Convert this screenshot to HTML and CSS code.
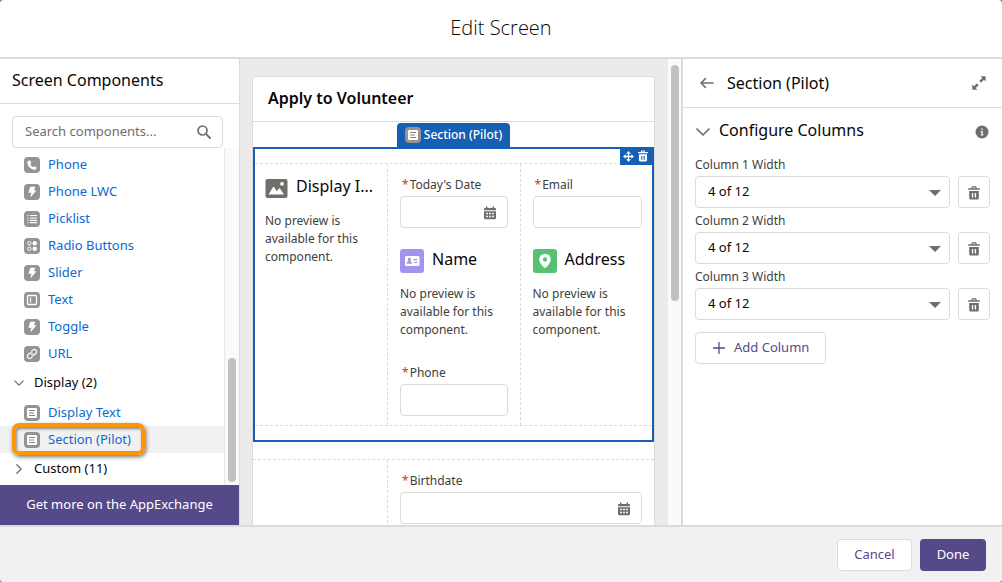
FILE: index.html
```html
<!DOCTYPE html>
<html lang="en">
<head>
<meta charset="utf-8">
<title>Edit Screen</title>
<meta name="viewport" content="width=device-width, initial-scale=1">
<link rel="stylesheet" href="styles.css">
</head>
<body>
<svg class="defs" aria-hidden="true">
  <symbol id="bolt" viewBox="0 0 16 16"><path fill="#fff" d="M6.700 2.800h4.300q.4 0 .2.400L9.900 6.300h2q.5 0 .2.500L6.800 13q-.5.300-.4-.3l1-3.900H4.900q-.5 0-.4-.5L6.200 3.200q.2-.4.500-.4z"/></symbol>
  <symbol id="lines" viewBox="0 0 16 16"><rect x="3" y="3" width="10" height="10" rx="1.200" fill="#fff"/><path d="M5 5.500h6M5 8h5M5 10.500h6" stroke="#868482" stroke-width="1.100"/></symbol>
  <symbol id="calendar" viewBox="0 0 12 14"><path fill="#706e6b" d="M1 2h1V.8q0-.6.7-.6t.7.6V2h5.200V.8q0-.6.7-.6t.7.6V2h1q1 0 1 1v1.200H0V3q0-1 1-1zM0 5.300h12V12q0 1.200-1.200 1.200H1.200Q0 13.200 0 12z"/><path fill="#fff" d="M2.200 6.700h1.800v1.600H2.200zM5.100 6.700h1.800v1.600H5.100zM8 6.700h1.800v1.600H8zM2.200 9.700h1.800v1.600H2.200zM5.100 9.700h1.800v1.600H5.100zM8 9.700h1.800v1.600H8z"/></symbol>
  <symbol id="trash" viewBox="0 0 12 14"><path fill="currentColor" fill-rule="evenodd" d="M.6 2.300h2.900V1.300Q3.500.3 4.500.3h3q1 0 1 1v1h2.900q.6 0 .6.600v.2q0 .6-.6.600H.6Q0 3.700 0 3.100v-.2q0-.6.6-.6zM4.700 1.500v.8h2.600v-.8zM1.200 5h9.600v7.200q0 1.300-1.300 1.300h-7q-1.300 0-1.300-1.300zM3.900 7v4.500h1.300V7zM6.800 7v4.500h1.300V7z"/></symbol>
  <symbol id="down" viewBox="0 0 14 14"><path d="M1 4l6 6 6-6" fill="none" stroke="#706e6b" stroke-width="1.700" stroke-linecap="round" stroke-linejoin="round"/></symbol>
</svg>

<header class="modal-header"><h1>Edit Screen</h1></header>

<main class="builder">
  <aside class="palette">
    <h2 class="palette-title">Screen Components</h2>
    <div class="search">
      <input type="text" aria-label="Search components" placeholder="Search components...">
      <svg class="search-icon" viewBox="0 0 14 14"><circle cx="5.500" cy="5.500" r="4.500" fill="none" stroke="#706e6b" stroke-width="1.700"/><path d="M8.800 8.800l4.200 4.200" stroke="#706e6b" stroke-width="1.900" stroke-linecap="round"/></svg>
    </div>
    <div class="palette-scroll">
      <div class="palette-list">
        <ul class="items first">
          <li><svg class="tile" viewBox="0 0 16 16"><path fill="#fff" d="M5.200 3.200q-2 .8-1.900 2.500.6 5 6.200 7.100 1.900.5 3-1.200.5-.7-.1-1.200l-1.500-1q-.5-.3-1 .2l-.7.700q-1.900-.8-2.900-2.800l.7-.8q.4-.4.100-1L6.200 3.500q-.4-.5-1-.3z"/></svg><a href="#">Phone</a></li>
          <li><svg class="tile"><use href="#bolt"/></svg><a href="#">Phone LWC</a></li>
          <li><svg class="tile" viewBox="0 0 16 16"><path d="M6 4.500h7M6 7h7M6 9.300h7M6 11.700h7" stroke="#fff" stroke-width="1.200"/><path d="M3 4.500h2M3 7h2M3 9.300h2M3 11.700h2" stroke="#d8d7d6"/></svg><a href="#">Picklist</a></li>
          <li><svg class="tile" viewBox="0 0 16 16"><g fill="none" stroke="#fff"><circle cx="5.300" cy="5.300" r="1.700"/><circle cx="5.300" cy="10.700" r="1.700"/></g><circle cx="10.700" cy="5.300" r="2.200" fill="#fff"/><circle cx="10.700" cy="10.700" r="2.200" fill="#fff"/></svg><a href="#">Radio Buttons</a></li>
          <li><svg class="tile"><use href="#bolt"/></svg><a href="#">Slider</a></li>
          <li><svg class="tile" viewBox="0 0 16 16"><rect x="3.500" y="3.500" width="9" height="9" rx="1" fill="none" stroke="#fff" stroke-width="1.300"/><path d="M6.500 5.500v5" stroke="#fff" stroke-width="1.200"/></svg><a href="#">Text</a></li>
          <li><svg class="tile"><use href="#bolt"/></svg><a href="#">Toggle</a></li>
          <li><svg class="tile" viewBox="0 0 16 16"><g fill="none" stroke="#fff" stroke-width="1.200" stroke-linecap="round"><path d="M7.600 5.200l1.500-1.300q1.600-1.100 2.900.2t.2 2.900L10.500 8.700q-1.300 1-2.600 0"/><path d="M8.400 10.800l-1.500 1.300q-1.600 1.100-2.900-.2t-.2-2.900l1.700-1.700q1.300-1 2.600 0"/></g></svg><a href="#">URL</a></li>
        </ul>
        <button class="group" type="button"><svg class="chev"><use href="#down"/></svg><span>Display (2)</span></button>
        <ul class="items">
          <li><svg class="tile"><use href="#lines"/></svg><a href="#">Display Text</a></li>
          <li class="hovered"><svg class="tile"><use href="#lines"/></svg><a href="#">Section (Pilot)</a><span class="callout"></span></li>
        </ul>
        <button class="group" type="button"><svg class="chev closed"><use href="#down"/></svg><span>Custom (11)</span></button>
      </div>
      <div class="track palette-track"><div class="thumb"></div></div>
    </div>
    <button class="exchange" type="button">Get more on the AppExchange</button>
  </aside>

  <section class="canvas">
    <div class="canvas-area">
      <div class="card">
        <h2 class="card-title">Apply to Volunteer</h2>
        <div class="tab-row"><span class="tab"><svg class="tile"><use href="#lines"/></svg>Section (Pilot)</span></div>
        <div class="selected">
          <div class="tools">
            <button type="button" aria-label="Move"><svg class="move" viewBox="0 0 12 12"><path d="M6 1.500v9M1.500 6h9" stroke="#fff" stroke-width="1.400"/><path fill="#fff" d="M6 0l2.500 2.900h-5zM6 12l2.500-2.900h-5zM0 6l2.900-2.500v5zM12 6L9.100 3.500v5z"/></svg></button>
            <button type="button" aria-label="Delete"><svg class="bin-small"><use href="#trash"/></svg></button>
          </div>
          <div class="columns">
            <div class="col">
              <div class="block-head"><svg class="image-icon" viewBox="0 0 22 19"><rect width="22" height="19" rx="2" fill="#706e6b"/><path fill="#fff" d="M3 15.500L7.600 8q.5-.7 1 0l2.600 4.200 2.200-2.600q.6-.6 1.100 0l4 5.900z"/><circle cx="16.500" cy="4.800" r="1.900" fill="#fff"/></svg><h3>Display I...</h3></div>
              <p>No preview is available for this component.</p>
            </div>
            <div class="col">
              <label for="today"><b>*</b>Today's Date</label>
              <div class="date"><input id="today" type="text"><svg><use href="#calendar"/></svg></div>
              <div class="block-head spaced"><svg class="type-icon name" viewBox="0 0 24 24"><rect x="5" y="7" width="14.500" height="10" rx="1.500" fill="#fff"/><path fill="#a094ed" d="M9.300 8.600q1.600 0 1.600 1.700 0 1.100-.7 1.800 1.900.5 1.900 2.600H6.600q0-2.100 1.900-2.600-.7-.7-.7-1.800 0-1.700 1.500-1.700zM13.300 10h4v1.200h-4zM14.300 12.700h3v1.200h-3z"/></svg><h3>Name</h3></div>
              <p>No preview is available for this component.</p>
              <label class="after" for="phone"><b>*</b>Phone</label>
              <input id="phone" type="text">
            </div>
            <div class="col">
              <label for="email"><b>*</b>Email</label>
              <input id="email" type="text">
              <div class="block-head spaced"><svg class="type-icon address" viewBox="0 0 24 24"><path fill="#fff" fill-rule="evenodd" d="M12 4.800q5.700.3 5.700 5.800 0 3.800-5 8.200-.7.500-1.400 0-5-4.400-5-8.200 0-5.500 5.700-5.800zM12 8.300a2.200 2.200 0 1 0 .01 0z"/></svg><h3>Address</h3></div>
              <p>No preview is available for this component.</p>
            </div>
          </div>
        </div>
        <div class="second">
          <div class="col"></div>
          <div class="col">
            <label for="birth"><b>*</b>Birthdate</label>
            <div class="date"><input id="birth" type="text"><svg><use href="#calendar"/></svg></div>
          </div>
        </div>
      </div>
    </div>
    <div class="track canvas-track"><div class="thumb"></div></div>
  </section>

  <aside class="props">
    <div class="props-head">
      <button type="button" aria-label="Back"><svg class="back" viewBox="0 0 16 12"><path d="M14 6H2M6.500 1.500L2 6l4.500 4.500" fill="none" stroke="#706e6b" stroke-width="1.600" stroke-linecap="round" stroke-linejoin="round"/></svg></button>
      <h2>Section (Pilot)</h2>
      <button type="button" aria-label="Expand"><svg class="expand" viewBox="0 0 14 14"><path fill="#706e6b" d="M8.600.3h4.500q.6 0 .6.600v4.500L12 3.700 9.400 6.300q-.4.300-.8 0l-.9-.9q-.3-.4 0-.8L10.300 2zM5.400 13.700H.9q-.6 0-.6-.6V8.600L2 10.300l2.600-2.600q.4-.3.800 0l.9.900q.3.400 0 .8L3.700 12z"/></svg></button>
    </div>
    <div class="props-body">
      <div class="config">
        <button class="config-title" type="button"><svg><use href="#down"/></svg><span>Configure Columns</span></button>
        <svg class="info" viewBox="0 0 14 14"><circle cx="7" cy="7" r="6.500" fill="#706e6b"/><path fill="#fff" d="M6.300 3.400h1.500v1.400H6.300zM5.700 5.900h2.100v3.500h.6v1H5.700v-1h.7V6.900h-.7z"/></svg>
      </div>
      <label for="w1">Column 1 Width</label>
      <div class="width-row"><div class="select"><select id="w1"><option>4 of 12</option></select></div><button class="bin" type="button" aria-label="Delete column 1"><svg><use href="#trash"/></svg></button></div>
      <label for="w2">Column 2 Width</label>
      <div class="width-row"><div class="select"><select id="w2"><option>4 of 12</option></select></div><button class="bin" type="button" aria-label="Delete column 2"><svg><use href="#trash"/></svg></button></div>
      <label for="w3">Column 3 Width</label>
      <div class="width-row"><div class="select"><select id="w3"><option>4 of 12</option></select></div><button class="bin" type="button" aria-label="Delete column 3"><svg><use href="#trash"/></svg></button></div>
      <button class="add" type="button"><svg viewBox="0 0 12 12"><path d="M6 .5v11M.5 6h11" stroke="#56498a" stroke-width="1.300" stroke-linecap="round"/></svg><span>Add Column</span></button>
    </div>
  </aside>
</main>

<footer class="modal-footer">
  <button class="cancel" type="button">Cancel</button>
  <button class="done" type="button">Done</button>
</footer>
</body>
</html>
```
FILE: styles.css
```css
* { box-sizing: border-box; }
html { background: #8c8b8a; }
body {
  margin: 0;
  height: 100vh;
  display: flex;
  flex-direction: column;
  overflow: hidden;
  border-radius: 4px;
  background: #fff;
  color: #080707;
  font: 13px/18px "Noto Sans", "Open Sans", sans-serif;
}
h1, h2, h3, p, ul { margin: 0; padding: 0; font-weight: 400; }
button, input, select { font: inherit; color: inherit; }
button { border: 0; padding: 0; background: none; cursor: pointer; }
svg { display: block; flex: none; }
.defs { position: absolute; width: 0; height: 0; }

.modal-header {
  flex: none;
  height: 59px;
  padding-bottom: 2px;
  border-bottom: 2px solid #dddbda;
  display: flex;
  align-items: center;
  justify-content: center;
}
.modal-header h1 {
  font-family: "Open Sans", "Noto Sans", sans-serif;
  font-size: 20px;
  font-weight: 300;
  line-height: 28px;
}

.builder {
  flex: 1;
  min-height: 0;
  display: grid;
  grid-template-columns: 240px minmax(0, 441fr) minmax(0, 321fr);
}

.palette {
  display: flex;
  flex-direction: column;
  min-height: 0;
  border-right: 1px solid #dddbda;
}
.palette-title {
  flex: none;
  height: 45px;
  padding: 0 12px;
  border-bottom: 1px solid #dddbda;
  font-size: 16px;
  line-height: 43px;
}
.search { flex: none; position: relative; padding: 12px 16px 0 12px; }
input {
  display: block;
  width: 100%;
  height: 32px;
  padding: 0 12px 2px;
  border: 1px solid #dddbda;
  border-radius: 4px;
  background: #fff;
}
input::placeholder { color: #706e6b; opacity: 1; }
.search-icon { position: absolute; right: 28px; top: 21px; width: 14px; height: 14px; }
.palette-scroll { flex: 1; min-height: 0; display: flex; }
.palette-list { flex: 1; min-width: 0; overflow: hidden; }
.items { list-style: none; }
.items.first { padding-top: 3px; }
.items li {
  position: relative;
  display: flex;
  align-items: center;
  gap: 8px;
  height: 27px;
  padding-left: 24px;
}
.items a { padding-bottom: 2px; color: #0b69d3; text-decoration: none; }
.tile { width: 16px; height: 16px; border-radius: 4px; background: #969492; }
.items .hovered { background: #f1f1f1; }
.callout {
  position: absolute;
  left: 12px;
  top: -3px;
  width: 133px;
  height: 32px;
  border: 4px solid #fe9602;
  border-radius: 7px;
  box-shadow: 1px 2px 4px rgba(0, 0, 0, .55), inset 1px 2px 3px rgba(0, 0, 0, .45);
}
.group {
  width: 100%;
  height: 32px;
  padding-left: 12px;
  display: flex;
  align-items: center;
  gap: 8px;
}
.group span, .add span { padding-bottom: 2px; }
.chev { width: 14px; height: 14px; padding: 2px; }
.closed { transform: rotate(-90deg); }

.track { flex: none; background: #fafafa; }
.thumb { border-radius: 4px; background: #c1c1c1; }
.palette-track {
  width: 15px;
  padding: 0 3px 3px;
  border-left: 1px solid #e8e8e8;
  display: flex;
  flex-direction: column;
  justify-content: flex-end;
}
.palette-track .thumb { width: 8px; height: 37%; }
.exchange { flex: none; height: 40px; padding-bottom: 2px; background: #56498a; color: #fff; }

.canvas { min-height: 0; display: flex; overflow: hidden; background: #ecebea; }
.canvas-area { flex: 1; min-width: 0; padding: 17px 13px 0 12px; }
.canvas-track { width: 13px; padding: 6px 3px; }
.canvas-track .thumb { width: 8px; height: 52%; }

.card {
  min-height: 100%;
  border: 1px solid #dddbda;
  border-radius: 4px 4px 0 0;
  background: #fff;
}
.card-title {
  height: 45px;
  padding: 0 15px;
  border-bottom: 1px solid #dddbda;
  font-size: 16px;
  font-weight: 600;
  line-height: 43px;
}
.tab-row { height: 25px; display: flex; justify-content: center; align-items: flex-end; }
.tab {
  height: 24px;
  padding: 0 8px;
  display: flex;
  align-items: center;
  gap: 3px;
  border-radius: 4px 4px 0 0;
  background: #155fb4;
  color: #fff;
  font-size: 12px;
  font-weight: 500;
}
.selected { position: relative; padding: 14px 0; border: 2px solid #155fb4; }
.tools {
  position: absolute;
  top: -2px;
  right: -2px;
  height: 18px;
  padding: 0 6px 0 3px;
  display: flex;
  align-items: center;
  gap: 4px;
  background: #155fb4;
  color: #fff;
}
.move { width: 11px; height: 11px; }
.bin-small { width: 10px; height: 12px; }
.columns {
  display: grid;
  grid-template-columns: 132px 1fr 1fr;
  border-top: 1px dashed #dddbda;
  border-bottom: 1px dashed #dddbda;
}
.col { min-width: 0; padding: 12px 12px 9px; }
.columns .col:first-child { padding-left: 10px; }
.columns .col:last-child { padding-right: 10px; }
.col + .col { border-left: 1px dashed #dddbda; }
label { display: block; font-size: 12px; line-height: 18px; color: #3e3e3c; }
.col label { padding: 0 0 0 2px; margin-bottom: 2px; }
.col label b { margin-right: 1px; color: #d8322c; font-weight: 400; }
.col .after { margin-top: 25px; }
.date { position: relative; }
.date svg { position: absolute; right: 12px; top: 10px; width: 12px; height: 14px; }
.block-head { display: flex; align-items: center; gap: 8px; height: 24px; }
.spaced { margin-top: 21px; }
.block-head h3 {
  min-width: 0;
  padding-bottom: 4px;
  white-space: nowrap;
  font-size: 16px;
  line-height: 24px;
}
.block-head + p { margin-top: 12px; }
.image-icon { width: 23px; height: 19px; }
.type-icon { width: 24px; height: 24px; border-radius: 3px; }
.name { background: #a094ed; }
.address { background: #56c271; }
.col p { font-size: 12px; line-height: 18px; color: #3e3e3c; }
.second {
  display: grid;
  grid-template-columns: 134px 1fr;
  margin-top: 17px;
  border-top: 1px dashed #dddbda;
}

.props { min-width: 0; border-left: 2px solid #dddbda; }
.props-head {
  height: 49px;
  padding: 0 16px;
  display: flex;
  align-items: center;
  gap: 12px;
  border-bottom: 1px solid #dddbda;
}
.props-head h2 { flex: 1; font-size: 16px; line-height: 24px; }
.back { width: 16px; height: 12px; }
.expand { width: 14px; height: 14px; }
.props-body { padding: 12px; }
.config { display: flex; align-items: center; justify-content: space-between; height: 24px; margin-bottom: 12px; }
.config-title { display: flex; align-items: center; gap: 8px; font-size: 16px; line-height: 20px; }
.config-title svg { width: 16px; height: 16px; padding: 1px; }
.config-title span { padding-bottom: 4px; }
.info { width: 16px; height: 14px; }
.props-body label { line-height: 18px; margin-bottom: 2px; }
.width-row { display: flex; gap: 8px; margin-bottom: 4px; }
.select { flex: 1; position: relative; }
.select::after {
  content: "";
  position: absolute;
  right: 9px;
  top: 14px;
  border: 6px solid transparent;
  border-top-color: #706e6b;
  border-bottom: 0;
  pointer-events: none;
}
select {
  display: block;
  appearance: none;
  width: 100%;
  height: 32px;
  padding: 0 12px 2px;
  border: 1px solid #dddbda;
  border-radius: 4px;
  background: #fff;
}
.bin {
  width: 32px;
  height: 32px;
  padding-top: 2px;
  display: flex;
  align-items: center;
  justify-content: center;
  border: 1px solid #dddbda;
  border-radius: 4px;
  color: #706e6b;
}
.bin svg { width: 12px; height: 14px; }
.add {
  display: flex;
  align-items: center;
  gap: 8px;
  height: 32px;
  margin-top: 12px;
  padding: 0 16px;
  border: 1px solid #dddbda;
  border-radius: 4px;
  color: #56498a;
}
.add svg { width: 14px; height: 12px; }

.modal-footer {
  flex: none;
  height: 57px;
  padding: 0 16px;
  display: flex;
  align-items: center;
  justify-content: flex-end;
  gap: 8px;
  border-top: 2px solid #dddbda;
  background: #f1f1f1;
}
.modal-footer button { height: 32px; min-width: 66px; padding: 0 16px 2px; border-radius: 4px; }
.modal-footer .cancel { min-width: 75px; border: 1px solid #dddbda; background: #fff; color: #56498a; }
.done { background: #56498a; color: #fff; }
```
